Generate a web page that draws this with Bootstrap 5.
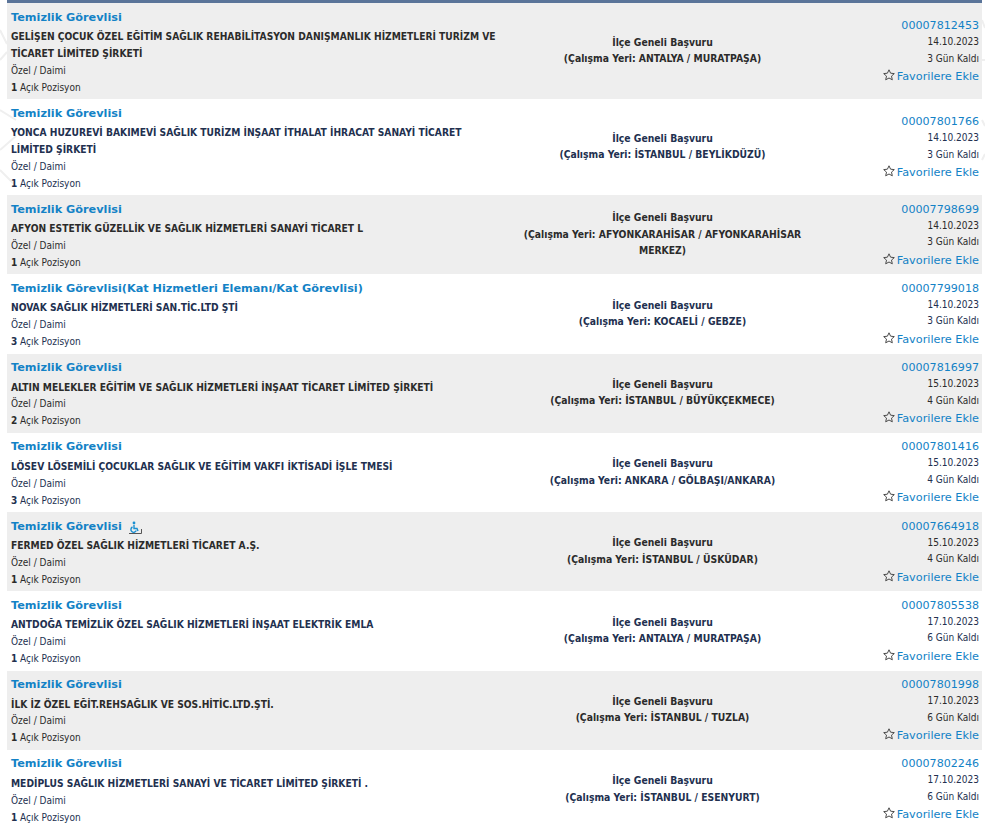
<!DOCTYPE html>
<html lang="tr"><head><meta charset="utf-8">
<link href="https://cdn.jsdelivr.net/npm/bootstrap@5.3.0/dist/css/bootstrap.min.css" rel="stylesheet">
<style>
html,body{height:828px;overflow:hidden}
body{background:#fff;font-family:"DejaVu Sans Condensed","DejaVu Sans",sans-serif;font-size:10px;color:#2b2b2b;position:relative}
.ilan-deco{position:absolute;left:0;top:0;z-index:-1}
.ilan-list{margin:0 3px 0 7px;border-top:3px solid #5a7499}
.ilan-row{padding:4.5px 3px 3.5px 4px;line-height:17px;color:#2b2b2b}
.ilan-row:nth-child(odd){background:#eee}
.ilan-row:nth-child(even){color:#22304f}
.ilan-left{width:500px;flex:none;padding-right:8px}
.ilan-mid{width:303px;flex:none;text-align:center;font-weight:700;font-size:10.3px;line-height:16.5px;padding-bottom:2.5px}
.ilan-right{flex:1;text-align:right;line-height:16.5px}
.ilan-title{color:#1382c6;font-family:"DejaVu Sans",sans-serif;font-weight:700;font-size:11.25px;line-height:20.5px;text-decoration:none;display:inline-block;margin-bottom:1px}
.ilan-firm{font-weight:700;font-size:10.2px;line-height:16.75px;margin-bottom:-1px}
.ilan-no{color:#1382c6;font-family:"DejaVu Sans",sans-serif;font-size:11.1px;text-decoration:none;display:block;line-height:17px}
.ilan-fav{color:#1382c6;font-family:"DejaVu Sans",sans-serif;font-size:11.25px;text-decoration:none;line-height:18px;display:block;margin-top:1px}
.ilan-star{vertical-align:-1px;margin-right:2px}
.ilan-dis{vertical-align:-3px;margin-left:6px}
</style></head><body>
<svg class="ilan-deco" width="985" height="828" aria-hidden="true"><g fill="none" stroke="#efefef" stroke-width="2"><path d="M0 30l7 14M0 60l7-8M0 110l16 10M0 150l16-14M0 170l14 14M982 60h3M982 20l3 8M982 120l3 6M982 160l3-6"/></g></svg>
<div class="ilan-list" id="L"></div>
<script>
const D=[
["Temizlik Görevlisi","GELİŞEN ÇOCUK ÖZEL EĞİTİM SAĞLIK REHABİLİTASYON DANIŞMANLIK HİZMETLERİ TURİZM VE TİCARET LİMİTED ŞİRKETİ",1,"ANTALYA / MURATPAŞA","00007812453","14.10.2023",3],
["Temizlik Görevlisi","YONCA HUZUREVİ BAKIMEVİ SAĞLIK TURİZM İNŞAAT İTHALAT İHRACAT SANAYİ TİCARET LİMİTED ŞİRKETİ",1,"İSTANBUL / BEYLİKDÜZÜ","00007801766","14.10.2023",3],
["Temizlik Görevlisi","AFYON ESTETİK GÜZELLİK VE SAĞLIK HİZMETLERİ SANAYİ TİCARET L",1,"AFYONKARAHİSAR / AFYONKARAHİSAR MERKEZ","00007798699","14.10.2023",3],
["Temizlik Görevlisi(Kat Hizmetleri Elemanı/Kat Görevlisi)","NOVAK SAĞLIK HİZMETLERİ SAN.TİC.LTD ŞTİ",3,"KOCAELİ / GEBZE","00007799018","14.10.2023",3],
["Temizlik Görevlisi","ALTIN MELEKLER EĞİTİM VE SAĞLIK HİZMETLERİ İNŞAAT TİCARET LİMİTED ŞİRKETİ",2,"İSTANBUL / BÜYÜKÇEKMECE","00007816997","15.10.2023",4],
["Temizlik Görevlisi","LÖSEV LÖSEMİLİ ÇOCUKLAR SAĞLIK VE EĞİTİM VAKFI İKTİSADİ İŞLE TMESİ",3,"ANKARA / GÖLBAŞI/ANKARA","00007801416","15.10.2023",4],
["Temizlik Görevlisi","FERMED ÖZEL SAĞLIK HİZMETLERİ TİCARET A.Ş.",1,"İSTANBUL / ÜSKÜDAR","00007664918","15.10.2023",4,1],
["Temizlik Görevlisi","ANTDOĞA TEMİZLİK ÖZEL SAĞLIK HİZMETLERİ İNŞAAT ELEKTRİK EMLA",1,"ANTALYA / MURATPAŞA","00007805538","17.10.2023",6],
["Temizlik Görevlisi","İLK İZ ÖZEL EĞİT.REHSAĞLIK VE SOS.HİTİC.LTD.ŞTİ.",1,"İSTANBUL / TUZLA","00007801998","17.10.2023",6],
["Temizlik Görevlisi","MEDİPLUS SAĞLIK HİZMETLERİ SANAYİ VE TİCARET LİMİTED ŞİRKETİ .",1,"İSTANBUL / ESENYURT","00007802246","17.10.2023",6]];
const star='<svg class="ilan-star" width="12" height="12" viewBox="0 0 12 12"><path d="M6 .8l1.6 3.4 3.7.4-2.8 2.5.8 3.7L6 9l-3.3 1.8.8-3.7L.7 4.6l3.7-.4z" fill="none" stroke="#4a4a4a" stroke-width="1"/></svg>';
const dis='<svg class="ilan-dis" width="14" height="14" viewBox="0 0 14 14"><circle cx="6" cy="3" r="1.4" fill="#1a8fd0"/><path d="M6 5v3.5h3l1 2.5M4.5 7a2.8 2.8 0 1 0 3.8 3.6" fill="none" stroke="#1a8fd0" stroke-width="1.4"/><path d="M1 13.5h12.5V9" fill="none" stroke="#555"/></svg>';
L.innerHTML=D.map(d=>`<div class="ilan-row d-flex align-items-center">
<div class="ilan-left align-self-start"><div class="d-flex align-items-center"><a class="ilan-title" href="#">${d[0]}</a>${d[7]?dis:''}</div><div class="ilan-firm">${d[1]}</div><div>Özel / Daimi</div><div><b>${d[2]}</b> Açık Pozisyon</div></div>
<div class="ilan-mid"><div>İlçe Geneli Başvuru</div><div>(Çalışma Yeri: ${d[3]})</div></div>
<div class="ilan-right"><a class="ilan-no" href="#">${d[4]}</a><div>${d[5]}</div><div>${d[6]} Gün Kaldı</div><a class="ilan-fav" href="#">${star}Favorilere Ekle</a></div></div>`).join('');
</script>
<script src="https://cdn.jsdelivr.net/npm/bootstrap@5.3.0/dist/js/bootstrap.bundle.min.js"></script>
</body></html>
